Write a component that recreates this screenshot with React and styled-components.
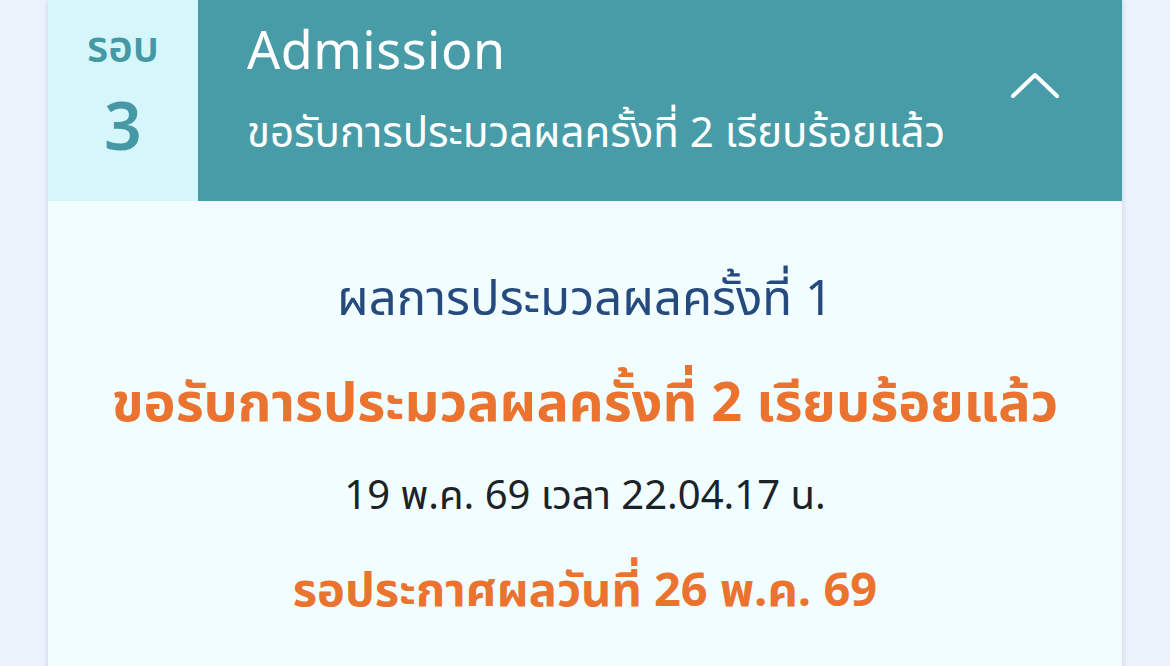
import React from 'react'
import styled, { createGlobalStyle } from 'styled-components'

const GlobalStyle = createGlobalStyle`
  html, body {
    margin: 0;
    padding: 0;
    background: #ecf3fd;
    font-family: "Noto Sans Thai", "Noto Sans", "Liberation Sans", sans-serif;
  }
`

const Page = styled.div`
  padding: 0 48px;
  height: 666px;
  overflow: hidden;
`
const Card = styled.div`
  background: #f1fdfe;
  box-shadow: 0 0 6px rgba(120, 140, 180, 0.35);
  min-height: 700px;
`
const Header = styled.div`
  display: flex;
  height: 201px;
`
const Round = styled.div`
  width: 150px;
  background: #d5f7fb;
  color: #4598a4;
  display: flex;
  flex-direction: column;
  align-items: center;
  padding-top: 23px;
  font-weight: 600;
`
const RoundLabel = styled.div`
  font-size: 42px;
  line-height: 50px;
`
const RoundNumber = styled.div`
  margin-top: 17px;
  font-size: 66px;
  line-height: 80px;
`
const HeaderMain = styled.div`
  flex: 1;
  background: #489ca8;
  color: #fff;
  display: flex;
  align-items: flex-start;
  padding: 17px 62px 0 49px;
`
const Titles = styled.div`
  flex: 1;
`
const Title = styled.div`
  font-size: 52px;
  line-height: 72px;
  letter-spacing: 0.5px;
`
const Subtitle = styled.div`
  font-size: 42px;
  line-height: 90px;
`
const Chevron = styled.svg`
  width: 50px;
  height: 30px;
  margin-top: 54px;
`
const Body = styled.div`
  display: flex;
  flex-direction: column;
  align-items: center;
  padding-top: 69px;
`
const Line = styled.div`
  color: ${p => p.$color};
  font-size: ${p => p.$size}px;
  font-weight: ${p => (p.$bold ? 700 : 400)};
  line-height: 60px;
  margin-top: ${p => p.$gap || 0}px;
`

export default function App() {
  return (
    <Page>
      <GlobalStyle />
      <Card>
        <Header>
          <Round>
            <RoundLabel>รอบ</RoundLabel>
            <RoundNumber>3</RoundNumber>
          </Round>
          <HeaderMain>
            <Titles>
              <Title>Admission</Title>
              <Subtitle>ขอรับการประมวลผลครั้งที่ 2 เรียบร้อยแล้ว</Subtitle>
            </Titles>
            <Chevron viewBox="0 0 50 30">
              <polyline
                points="3,25 25,4 47,25"
                fill="none"
                stroke="#fff"
                strokeWidth="4"
                strokeLinecap="round"
                strokeLinejoin="round"
              />
            </Chevron>
          </HeaderMain>
        </Header>
        <Body>
          <Line $color="#244a7e" $size={49}>
            ผลการประมวลผลครั้งที่ 1
          </Line>
          <Line $color="#ea7330" $size={54} $gap={45} $bold>
            ขอรับการประมวลผลครั้งที่ 2 เรียบร้อยแล้ว
          </Line>
          <Line $color="#1b2228" $size={40} $gap={32}>
            19 พ.ค. 69 เวลา 22.04.17 น.
          </Line>
          <Line $color="#ea7330" $size={47} $gap={35} $bold>
            รอประกาศผลวันที่ 26 พ.ค. 69
          </Line>
        </Body>
      </Card>
    </Page>
  )
}
